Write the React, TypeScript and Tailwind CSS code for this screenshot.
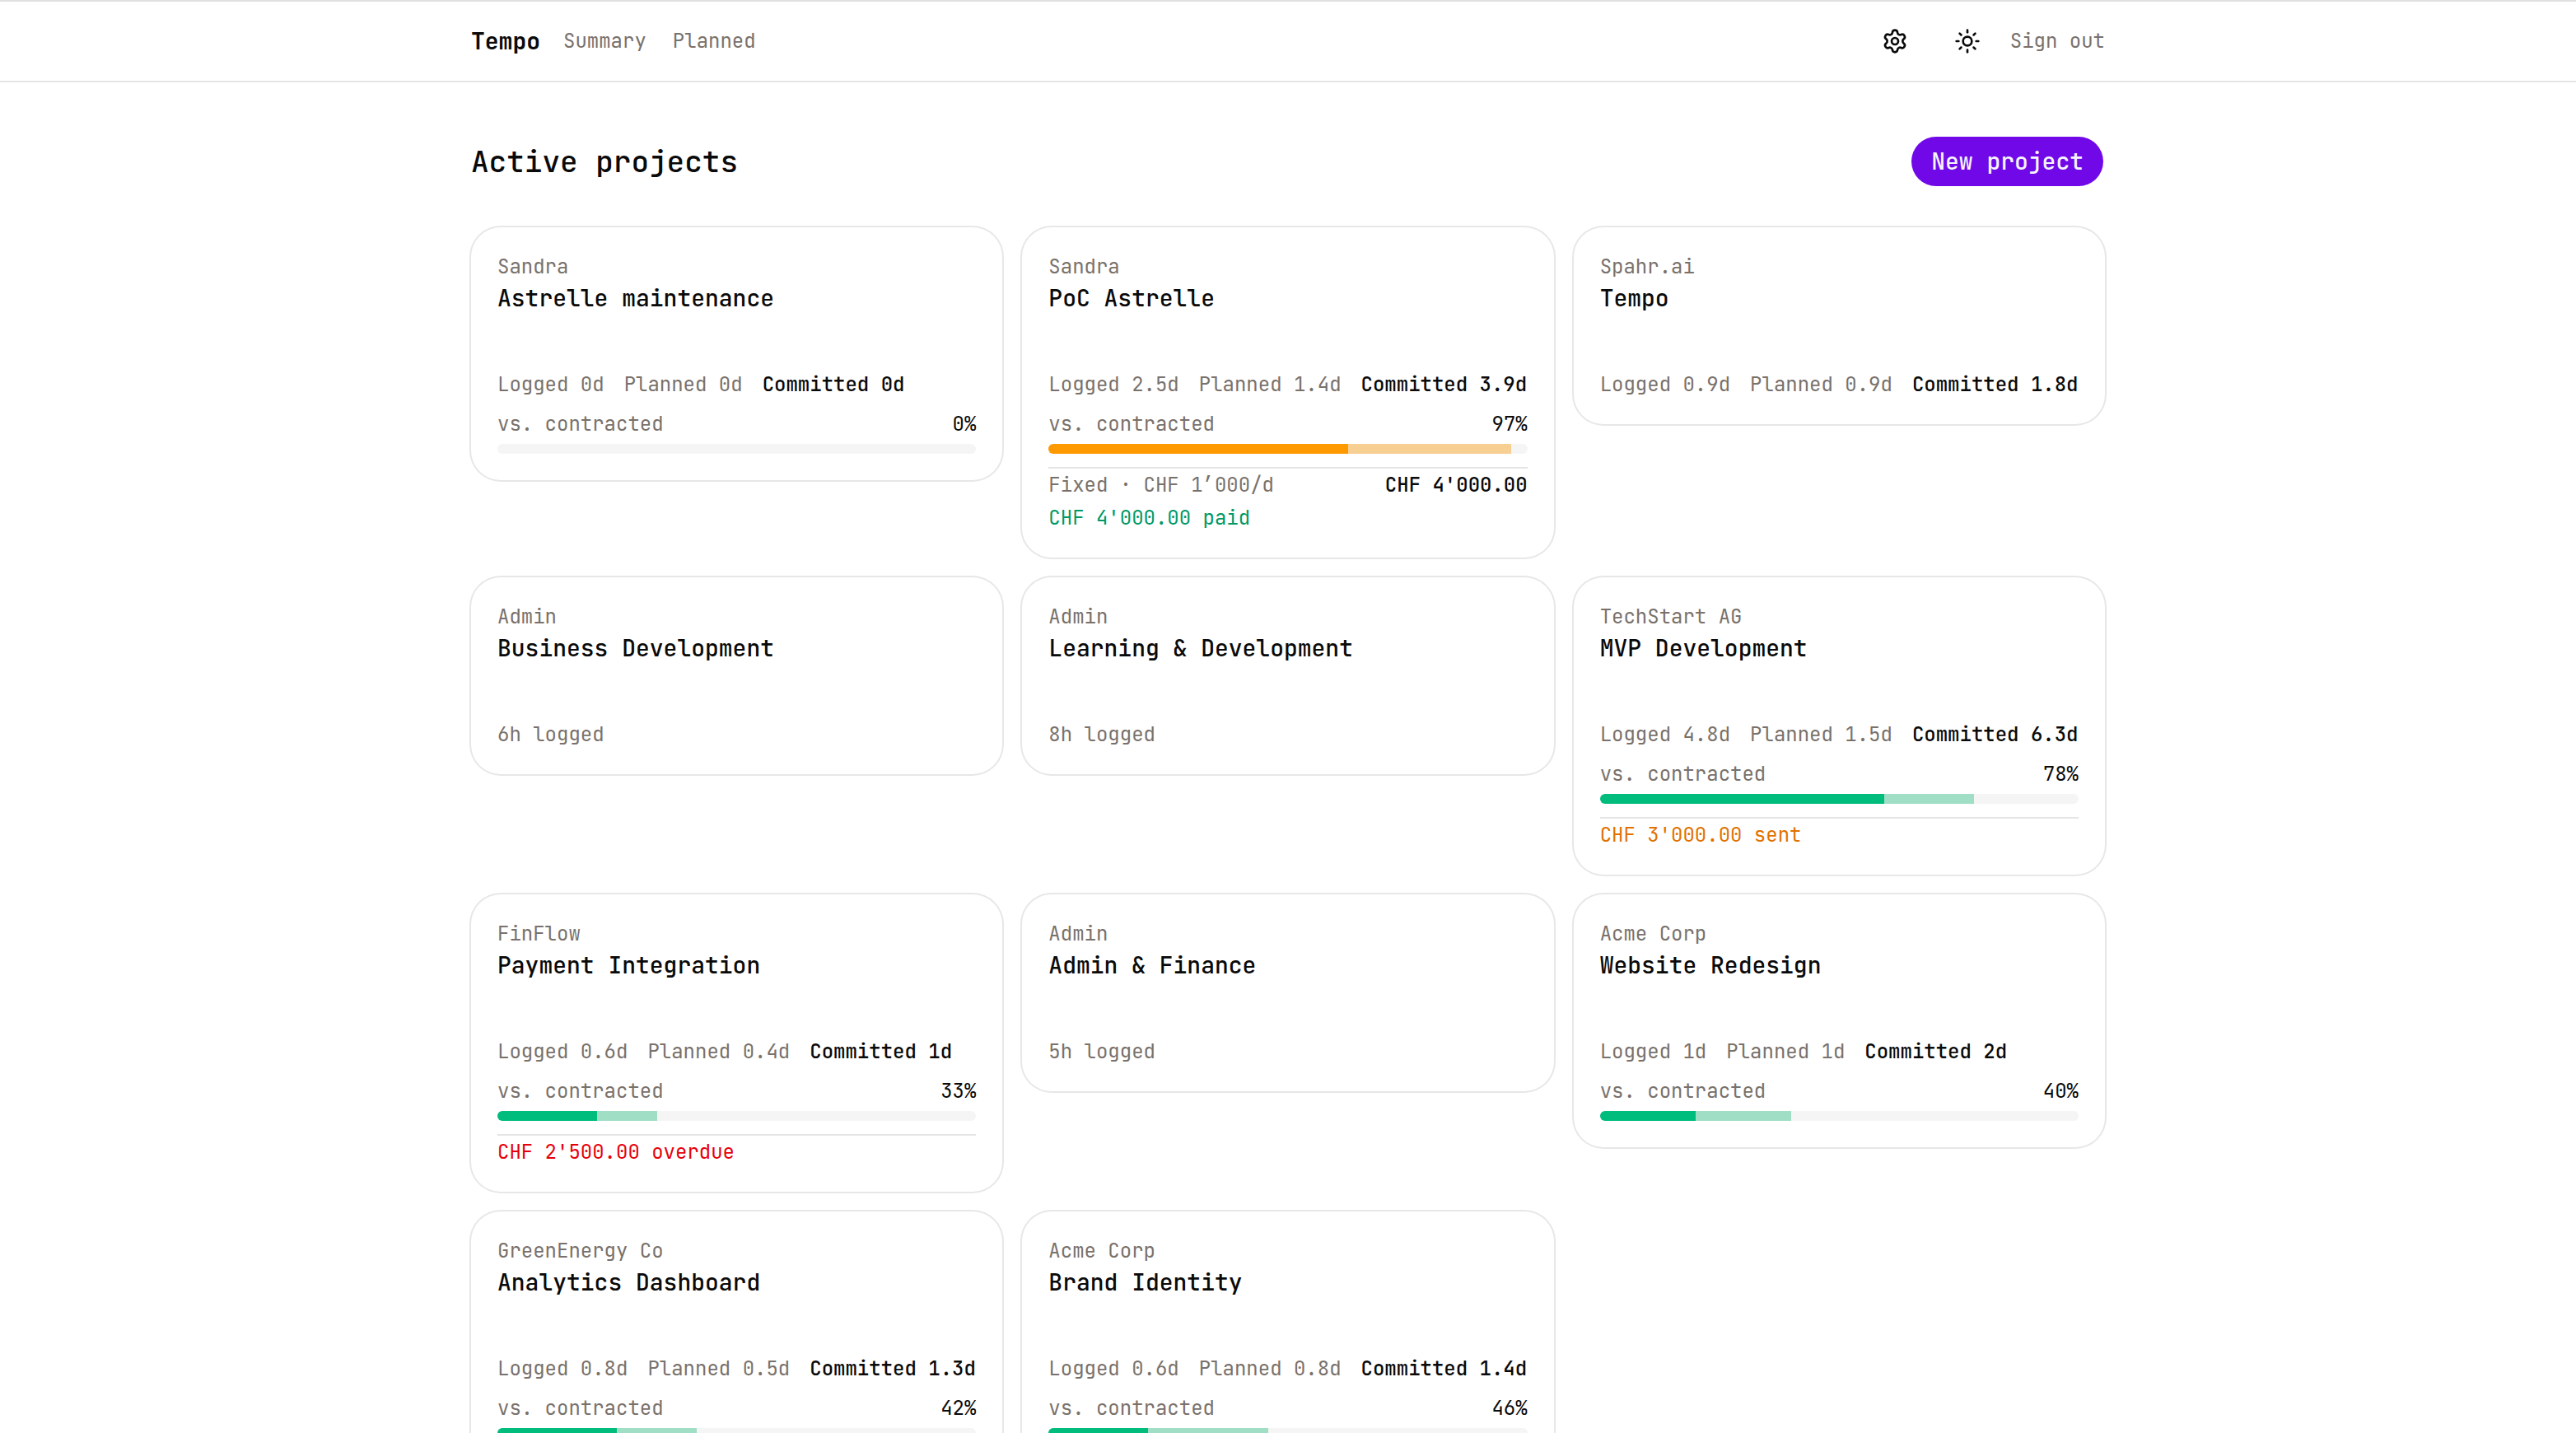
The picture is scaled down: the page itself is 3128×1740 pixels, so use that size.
import React from "react";
import { Settings, Sun } from "lucide-react";

type Tone = "amber" | "emerald";

type Project = {
  client: string;
  name: string;
  hours?: string;
  days?: { logged: string; planned: string; committed: string };
  budget?: { label: string; logged: number; planned: number; tone: Tone };
  billing?: { terms: string; total: string };
  invoice?: { text: string; state: "paid" | "sent" | "overdue" };
};

const projects: Project[] = [
  {
    client: "Sandra",
    name: "Astrelle maintenance",
    days: { logged: "0d", planned: "0d", committed: "0d" },
    budget: { label: "0%", logged: 0, planned: 0, tone: "emerald" },
  },
  {
    client: "Sandra",
    name: "PoC Astrelle",
    days: { logged: "2.5d", planned: "1.4d", committed: "3.9d" },
    budget: { label: "97%", logged: 62.5, planned: 34.2, tone: "amber" },
    billing: { terms: "Fixed · CHF 1’000/d", total: "CHF 4'000.00" },
    invoice: { text: "CHF 4'000.00 paid", state: "paid" },
  },
  {
    client: "Spahr.ai",
    name: "Tempo",
    days: { logged: "0.9d", planned: "0.9d", committed: "1.8d" },
  },
  { client: "Admin", name: "Business Development", hours: "6h logged" },
  { client: "Admin", name: "Learning & Development", hours: "8h logged" },
  {
    client: "TechStart AG",
    name: "MVP Development",
    days: { logged: "4.8d", planned: "1.5d", committed: "6.3d" },
    budget: { label: "78%", logged: 59.4, planned: 18.7, tone: "emerald" },
    invoice: { text: "CHF 3'000.00 sent", state: "sent" },
  },
  {
    client: "FinFlow",
    name: "Payment Integration",
    days: { logged: "0.6d", planned: "0.4d", committed: "1d" },
    budget: { label: "33%", logged: 20.8, planned: 12.5, tone: "emerald" },
    invoice: { text: "CHF 2'500.00 overdue", state: "overdue" },
  },
  { client: "Admin", name: "Admin & Finance", hours: "5h logged" },
  {
    client: "Acme Corp",
    name: "Website Redesign",
    days: { logged: "1d", planned: "1d", committed: "2d" },
    budget: { label: "40%", logged: 20, planned: 20, tone: "emerald" },
  },
  {
    client: "GreenEnergy Co",
    name: "Analytics Dashboard",
    days: { logged: "0.8d", planned: "0.5d", committed: "1.3d" },
    budget: { label: "42%", logged: 25, planned: 16.6, tone: "emerald" },
  },
  {
    client: "Acme Corp",
    name: "Brand Identity",
    days: { logged: "0.6d", planned: "0.8d", committed: "1.4d" },
    budget: { label: "46%", logged: 20.8, planned: 25, tone: "emerald" },
  },
];

const solid: Record<Tone, string> = { amber: "bg-[#fe9a00]", emerald: "bg-[#00bc7d]" };
const light: Record<Tone, string> = { amber: "bg-[#f8cf92]", emerald: "bg-[#a0dfc5]" };
const invoiceColor = {
  paid: "text-[#009966]",
  sent: "text-[#e17100]",
  overdue: "text-[#e7000b]",
};

function Budget({ budget }: { budget: NonNullable<Project["budget"]> }) {
  return (
    <div className="mt-4">
      <div className="flex justify-between">
        <span className="text-[#79716b]">vs. contracted</span>
        <span>{budget.label}</span>
      </div>
      <div className="mt-2 flex h-3 overflow-hidden rounded-md bg-[#f5f5f5]">
        <div className={solid[budget.tone]} style={{ width: `${budget.logged}%` }} />
        <div className={light[budget.tone]} style={{ width: `${budget.planned}%` }} />
      </div>
    </div>
  );
}

function ProjectCard({ project }: { project: Project }) {
  const { client, name, hours, days, budget, billing, invoice } = project;
  return (
    <article className="rounded-[36px] bg-white p-8 text-2xl leading-8 whitespace-nowrap ring-2 ring-[#e7e7e7]">
      <p className="text-[#79716b]">{client}</p>
      <h2 className="mt-1 text-[28px] leading-9 font-medium">{name}</h2>
      <div className="mt-[71px]">
        {hours && <p className="text-[#79716b]">{hours}</p>}
        {days && (
          <div className="flex gap-6">
            <span className="text-[#79716b]">Logged {days.logged}</span>
            <span className="text-[#79716b]">Planned {days.planned}</span>
            <span className="font-medium">Committed {days.committed}</span>
          </div>
        )}
        {budget && <Budget budget={budget} />}
        {(billing || invoice) && (
          <div className="mt-4 flex flex-col gap-2 border-t-2 border-[#e5e5e5] pt-1">
            {billing && (
              <div className="flex justify-between">
                <span className="text-[#79716b]">{billing.terms}</span>
                <span className="font-medium">{billing.total}</span>
              </div>
            )}
            {invoice && <p className={invoiceColor[invoice.state]}>{invoice.text}</p>}
          </div>
        )}
      </div>
    </article>
  );
}

export default function App() {
  return (
    <div className="h-screen overflow-y-auto border-t-2 border-[#e0e0e0] bg-white font-['JetBrains_Mono','DejaVu_Sans_Mono',monospace] text-[#0a0a0a] [scrollbar-width:none]">
      <header className="border-b-2 border-[#e5e5e5]">
        <div className="mx-auto flex h-24 max-w-[1984px] items-center justify-between text-2xl">
          <div className="flex items-center gap-7">
            <a href="#" className="text-[28px] leading-9 font-semibold">
              Tempo
            </a>
            <nav className="flex gap-8 text-[#79716b]">
              <a href="#summary">Summary</a>
              <a href="#planned">Planned</a>
            </nav>
          </div>
          <div className="flex items-center gap-6">
            <div className="flex items-center gap-8">
              <button type="button" aria-label="Settings" className="flex size-14 items-center justify-center">
                <Settings className="size-8" />
              </button>
              <button type="button" aria-label="Toggle theme" className="flex size-14 items-center justify-center">
                <Sun className="size-8" />
              </button>
            </div>
            <button type="button" className="text-[#79716b]">
              Sign out
            </button>
          </div>
        </div>
      </header>
      <main className="mx-auto max-w-[1984px] py-16">
        <div className="mb-12 flex items-center justify-between">
          <h1 className="text-4xl font-medium">Active projects</h1>
          <button
            type="button"
            className="h-16 rounded-full border-2 border-transparent bg-[#7008e7] bg-clip-padding px-6 text-[28px] leading-9 font-medium text-[#f5f3ff]"
          >
            New project
          </button>
        </div>
        <div className="grid grid-cols-3 items-start gap-6">
          {projects.map((project) => (
            <ProjectCard key={project.name} project={project} />
          ))}
        </div>
      </main>
    </div>
  );
}
